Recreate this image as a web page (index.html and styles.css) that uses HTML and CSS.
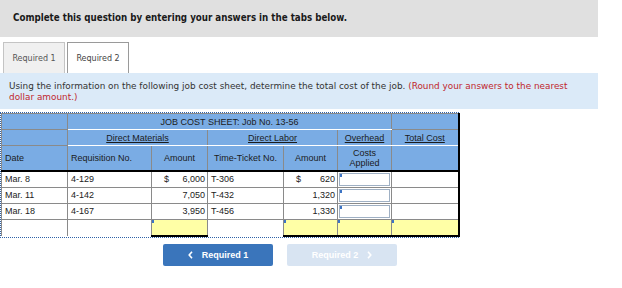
FILE: index.html
```html
<!DOCTYPE html>
<html>
<head>
<meta charset="utf-8">
<link rel="stylesheet" href="styles.css">
</head>
<body>
<div class="page">
  <div class="qhead">Complete this question by entering your answers in the tabs below.</div>
  <div class="tabs">
    <div class="tab tab-off">Required 1</div>
    <div class="tab tab-on">Required 2</div>
  </div>
  <div class="info">Using the information on the following job cost sheet, determine the total cost of the job. <span class="red">(Round your answers to the nearest dollar amount.)</span></div>
  <div class="sheet">
    <table class="jc">
      <colgroup>
        <col class="c1"><col class="c2"><col class="c3"><col class="c4"><col class="c5"><col class="c6"><col class="c7">
      </colgroup>
      <tr class="r-title">
        <th class="hd"></th>
        <th class="hd grp" colspan="5">JOB COST SHEET: Job No. 13-56</th>
        <th class="hd lastc"></th>
      </tr>
      <tr class="r-grp">
        <th class="hd"></th>
        <th class="hd grp" colspan="2"><u>Direct Materials</u></th>
        <th class="hd grp" colspan="2"><u>Direct Labor</u></th>
        <th class="hd grp"><u>Overhead</u></th>
        <th class="hd grp lastc"><u>Total Cost</u></th>
      </tr>
      <tr class="r-col">
        <th class="hd left">Date</th>
        <th class="hd left">Requisition No.</th>
        <th class="hd">Amount</th>
        <th class="hd">Time-Ticket No.</th>
        <th class="hd">Amount</th>
        <th class="hd">Costs<br>Applied</th>
        <th class="hd lastc"></th>
      </tr>
      <tr class="r-data">
        <td>Mar. 8</td>
        <td>4-129</td>
        <td class="amt"><span class="dol">$</span><span>6,000</span></td>
        <td>T-306</td>
        <td class="amt"><span class="dol">$</span><span>620</span></td>
        <td class="inp"><div class="box"></div></td>
        <td class="lastc"></td>
      </tr>
      <tr class="r-data">
        <td>Mar. 11</td>
        <td>4-142</td>
        <td class="amt"><span></span><span>7,050</span></td>
        <td>T-432</td>
        <td class="amt"><span></span><span>1,320</span></td>
        <td class="inp"><div class="box"></div></td>
        <td class="lastc"></td>
      </tr>
      <tr class="r-data">
        <td>Mar. 18</td>
        <td>4-167</td>
        <td class="amt"><span></span><span>3,950</span></td>
        <td>T-456</td>
        <td class="amt"><span></span><span>1,330</span></td>
        <td class="inp"><div class="box"></div></td>
        <td class="lastc"></td>
      </tr>
      <tr class="r-total">
        <td></td>
        <td></td>
        <td class="yel"><div class="ybox"></div></td>
        <td></td>
        <td class="yel"><div class="ybox"></div></td>
        <td class="yel"><div class="ybox"></div></td>
        <td class="yel lastc"><div class="ybox"></div></td>
      </tr>
    </table>
  </div>
  <div class="nav">
    <div class="btn btn-prev"><svg class="chev" width="5" height="8" viewBox="0 0 5 8"><path d="M4 0.8 L1.2 4 L4 7.2" fill="none" stroke="#fff" stroke-width="1.6"/></svg><span>Required 1</span></div>
    <div class="btn btn-next"><span>Required 2</span><svg class="chev" width="5" height="8" viewBox="0 0 5 8"><path d="M1 0.8 L3.8 4 L1 7.2" fill="none" stroke="#fff" stroke-width="1.6"/></svg></div>
  </div>
</div>
</body>
</html>
```
FILE: styles.css
```css
* { box-sizing: border-box; }
body { margin: 0; background: #fff; font-family: "DejaVu Sans", Verdana, sans-serif; color: #222; }
.page { width: 622px; }
.qhead {
  width: 598px; height: 37px; background: #e0e0e0;
  padding-left: 13px; padding-bottom: 3px; display: flex; align-items: center;
  font-weight: bold; font-size: 9.7px; color: #1a1a1a;
  font-stretch: condensed;
}
.tabs { display: flex; gap: 2px; padding-left: 3px; margin-top: 5px; height: 31px; }
.tab {
  width: 62px; height: 31px; display: flex; align-items: center; justify-content: center;
  font-size: 8px; color: #555; border: 1px solid #c4c4c4; border-bottom: none;
}
.tab-off { background: #f0f0f0; }
.tab-on { background: #fff; border-color: #9a9a9a; color: #444; }
.info {
  width: 598px; height: 36px; background: #dbeaf8;
  padding: 8px 18px 0 9px; font-size: 8.9px; line-height: 11px; color: #333;
}
.red { color: #c0272d; }
.sheet {
  margin-top: 3px; width: 459px; border: 1px dotted #2f62a8; padding: 0;
}
.jc {
  border-collapse: collapse; table-layout: fixed; width: 457px;
  font-family: "Liberation Sans", Arial, sans-serif; font-size: 9px; color: #222;
}
.c1 { width: 66px; } .c2 { width: 84px; } .c3 { width: 56px; } .c4 { width: 76px; }
.c5 { width: 54px; } .c6 { width: 54px; } .c7 { width: 67px; }
.jc th, .jc td { border: 1px solid #8a8a8a; padding: 0 3px; }
.hd { background: #7aace4; font-weight: normal; text-align: center; color: #1b1b1b; }
.hd.left { text-align: left; }
.grp { border-bottom-color: #fff !important; }
.r-title { height: 16px; }
.r-grp { height: 16px; }
.r-col { height: 25px; }
.r-col th { border-bottom: 2px solid #000; line-height: 10px; }
.r-data { height: 16px; }
.r-data td { background: #fff; }
.amt span { display: inline-block; }
.amt { padding: 0 2px 0 12px !important; }
.amt .dol { width: 10px; }
.amt span:last-child { float: right; }
.amt { text-align: left; }
.jc .lastc { border-right: 2px solid #000; }
.inp { padding: 1px !important; }
.box { height: 13px; border: 1px solid #9fb0c4; position: relative; background: #fff; }
.box::before, .ybox::before { content: ""; position: absolute; left: 0; top: 0; width: 2px; height: 3px; background: #3d74c4; }
.r-total { height: 17px; }
.r-total td { background: #fff; border-bottom: none; }
.jc .yel { background: #ffffa6; padding: 0 !important; border-bottom: 2px solid #000; border-top-color: #4a5a70; }
.ybox { height: 15px; position: relative; }
.nav { display: flex; gap: 14px; padding-left: 163px; margin-top: 6px; }
.btn {
  width: 110px; height: 22px; display: flex; align-items: center; justify-content: center; gap: 9px;
  font-family: "Liberation Sans", Arial, sans-serif; font-weight: bold; font-size: 9px; color: #fff;
  border-radius: 2px;
}
.btn-prev { background: #3a75bb; }
.btn-next { background: #d8e4f2; }
.chev { display: block; }
```
